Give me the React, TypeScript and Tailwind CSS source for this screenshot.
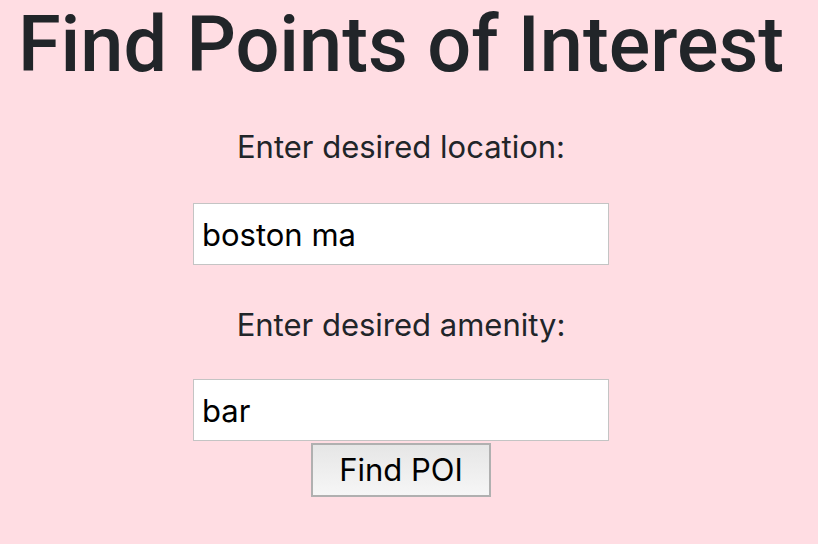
export default function App() {
  return (
    <div className="min-h-screen w-full bg-[#ffdde3]">
      <div className="w-[802px] flex flex-col items-center text-center text-[#212529] font-['Inter',sans-serif]">
        <h1 className="mt-[1px] whitespace-nowrap font-['Roboto',sans-serif] text-[77.5px] leading-[88px] font-medium">Find Points of Interest</h1>
        <label htmlFor="location" className="mt-[36px] text-[31px] leading-[43px]">
          Enter desired location:
        </label>
        <input
          id="location"
          type="text"
          defaultValue="boston ma"
          className="mt-[35px] w-[416px] h-[62px] px-[8px] bg-white border border-[#c4c4c4] text-[31px] text-black outline-none"
        />
        <label htmlFor="amenity" className="mt-[38px] text-[31px] leading-[43px]">
          Enter desired amenity:
        </label>
        <input
          id="amenity"
          type="text"
          defaultValue="bar"
          className="mt-[33px] w-[416px] h-[62px] px-[8px] bg-white border border-[#c4c4c4] text-[31px] text-black outline-none"
        />
        <button className="mt-[2px] w-[180px] h-[54px] border-2 border-[#b0b0b0] bg-gradient-to-b from-[#e6e6e6] to-[#f6f6f6] text-[31px] text-black">
          Find POI
        </button>
      </div>
    </div>
  )
}
